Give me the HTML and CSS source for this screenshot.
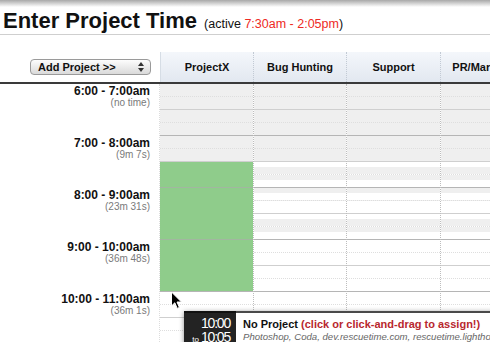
FILE: index.html
```html
<!DOCTYPE html>
<html lang="en">

<head>
    <meta charset="UTF-8">
    <meta name="viewport" content="width=device-width, initial-scale=1.0">
    <title>Enter Project Time</title>
    <link rel="stylesheet" href="styles.css">
</head>

<body>
    <h1 class="title">Enter Project Time <span class="active">(active <span class="range">7:30am - 2:05pm</span>)</span></h1>

    <div class="schedule">
        <!-- Column headers -->
        <div class="head">
            <div class="head-corner">
                <button class="add-project" type="button">
                    Add Project &gt;&gt;
                    <svg width="6" height="10" viewBox="0 0 6 10"><path d="M0 4 L3 0 L6 4 Z M0 6 L3 10 L6 6 Z" fill="#333"/></svg>
                </button>
            </div>
            <div class="head-cell first">ProjectX</div>
            <div class="head-cell">Bug Hunting</div>
            <div class="head-cell">Support</div>
            <div class="head-cell">PR/Marketing</div>
        </div>

        <!-- Hour rows -->
        <div class="grid">
            <div class="labels">
                <div class="hour-label"><div class="hour-range">6:00 - 7:00am</div><div class="spent">(no time)</div></div>
                <div class="hour-label"><div class="hour-range">7:00 - 8:00am</div><div class="spent">(9m 7s)</div></div>
                <div class="hour-label"><div class="hour-range">8:00 - 9:00am</div><div class="spent">(23m 31s)</div></div>
                <div class="hour-label"><div class="hour-range">9:00 - 10:00am</div><div class="spent">(36m 48s)</div></div>
                <div class="hour-label"><div class="hour-range">10:00 - 11:00am</div><div class="spent">(36m 1s)</div></div>
            </div>
            <div class="col"></div>
            <div class="col"></div>
            <div class="col"></div>
            <div class="col"></div>
        </div>
    </div>

    <!-- Mouse pointer -->
    <svg class="pointer" width="13" height="19" viewBox="0 0 13 19">
        <path d="M1.5 1 L1.5 15 L4.8 11.8 L7.2 17.4 L9.4 16.4 L7 11 L11.5 11 Z" fill="#000" stroke="#fff" stroke-width="1"/>
    </svg>

    <!-- Hover tooltip -->
    <div class="tip">
        <div class="tip-time">
            <div class="t">10:00</div>
            <div class="t"><span class="to">to</span>10:05</div>
        </div>
        <div class="tip-info">
            <div class="tip-title">No Project <span class="assign">(click or click-and-drag to assign!)</span></div>
            <div class="tip-apps">Photoshop, Coda, dev.rescuetime.com, rescuetime.lighthouseapp.com</div>
        </div>
    </div>

    <script src="script.js"></script>
</body>

</html>
```

FILE: styles.css
```css
html,
body {
    margin: 0;
    padding: 0;
    overflow: hidden;
}

body {
    position: relative;
    height: 342px;
    font-family: 'Liberation Sans', Arial, sans-serif;
    color: #111;
    background: #fff linear-gradient(#a8a8a8, #fff 7px) no-repeat;
}

.title {
    margin: 0;
    padding: 8px 0 0 3px;
    height: 26px;
    font-size: 22px;
    line-height: 26px;
    font-weight: bold;
    white-space: nowrap;
    border-bottom: 1px solid #cfcfcf;
}

.title .active {
    margin-left: 1px;
    font-size: 12.5px;
    font-weight: normal;
}

.title .range {
    color: #ee2a24;
}

.schedule {
    margin-top: 17px;
    width: 535px;
}

/* Header row */
.head {
    display: grid;
    grid-template-columns: 160px 94px 93px 94px 94px;
    height: 30px;
    border-bottom: 2px solid #3a3a3a;
}

.head-corner {
    display: flex;
    align-items: center;
    padding-left: 30px;
}

.add-project {
    display: flex;
    align-items: center;
    justify-content: space-between;
    width: 121px;
    height: 16px;
    margin: 0;
    padding: 0 6px 0 7px;
    border: 1px solid #9a9a9a;
    border-radius: 4px;
    background: linear-gradient(#fdfdfd, #dadada);
    font-family: 'Liberation Sans', Arial, sans-serif;
    font-size: 11px;
    font-weight: bold;
    color: #111;
}

.head-cell {
    display: flex;
    align-items: center;
    justify-content: center;
    white-space: nowrap;
    font-size: 11px;
    font-weight: bold;
    background: linear-gradient(#f4f7fb, #e2e8f0);
    border-right: 1px dotted #c2cad4;
}

.head-cell.first {
    border-left: 1px solid #d6dde5;
}

/* Body */
.grid {
    display: grid;
    grid-template-columns: 160px 94px 93px 94px 94px;
}

.labels {
    border-right: 1px dotted #dcdcdc;
}

.hour-label {
    height: 52px;
    box-sizing: border-box;
    padding: 1px 9px 0 0;
    text-align: right;
}

.hour-range {
    font-size: 12px;
    line-height: 13px;
    font-weight: bold;
}

.spent {
    font-size: 10px;
    line-height: 10px;
    color: #7a7a7a;
}

.col {
    border-right: 1px dotted #bdbdbd;
}

.hour {
    display: flex;
    flex-direction: column;
    height: 52px;
    box-sizing: border-box;
    border-bottom: 1px solid #b5b5b5;
}

.hour.on-green {
    border-bottom-color: #a2b6a0;
}

.q {
    flex: 1;
}

.q:nth-child(1),
.q:nth-child(3) {
    border-bottom: 1px dotted #dedede;
}

.q:nth-child(2) {
    border-bottom: 1px solid #cfcfcf;
}

.g {
    background: #efefef;
}

.w {
    background: #fff;
}

.wg {
    background: linear-gradient(#fff 5px, #efefef 5px);
}

.gw {
    background: linear-gradient(#efefef 5px, #fff 5px);
}

.q.green {
    background: #8fcc8b;
    border-bottom-color: #8fcc8b;
}

/* Pointer and tooltip sit over the grid */
.pointer {
    position: absolute;
    left: 170px;
    top: 291px;
}

.tip {
    position: absolute;
    left: 184px;
    top: 311px;
    display: flex;
    box-shadow: 0 1px 5px rgba(0, 0, 0, 0.45);
}

.tip-time {
    width: 52px;
    box-sizing: border-box;
    padding: 3px 6px 0 0;
    text-align: right;
    color: #fff;
    background: #232323;
    border-top: 2px solid #111;
}

.tip-time .t {
    font-size: 14px;
    line-height: 14px;
    letter-spacing: -1.2px;
    white-space: nowrap;
}

.tip-time .to {
    font-size: 8px;
    letter-spacing: 0;
    margin-right: 2px;
}

.tip-info {
    width: 320px;
    padding: 5px 0 0 7px;
    white-space: nowrap;
    background: #fff;
    border-top: 2px solid #4a4a4a;
}

.tip-title {
    font-size: 11px;
    line-height: 13px;
    font-weight: bold;
}

.tip-title .assign {
    color: #b8282e;
}

.tip-apps {
    font-size: 9.6px;
    line-height: 12px;
    font-style: italic;
    color: #666;
}
```

FILE: script.js
```js
// quarter-hour shading for each hour row, 6am to 10am
// g = idle, w = active, wg / gw = split inside the quarter
var shading = [
    ['g', 'g', 'g', 'g'],
    ['g', 'g', 'wg', 'gw'],
    ['gw', 'w', 'wg', 'gw'],
    ['w', 'w', 'w', 'w'],
    ['w', 'w', 'w', 'w']
];

// ProjectX was assigned from 7:30 to 10:00
function isProjectX(h, q) {
    var slot = h * 4 + q;
    return slot >= 6 && slot < 16;
}

var columns = document.querySelectorAll('.col');
columns.forEach(function (col, c) {
    shading.forEach(function (row, h) {
        var hour = document.createElement('div');
        hour.className = 'hour';
        if (c === 0 && (h === 1 || h === 2)) {
            hour.classList.add('on-green');
        }
        row.forEach(function (shade, q) {
            var cell = document.createElement('div');
            var green = c === 0 && isProjectX(h, q);
            cell.className = 'q ' + (green ? 'green' : shade);
            hour.appendChild(cell);
        });
        col.appendChild(hour);
    });
});
```
